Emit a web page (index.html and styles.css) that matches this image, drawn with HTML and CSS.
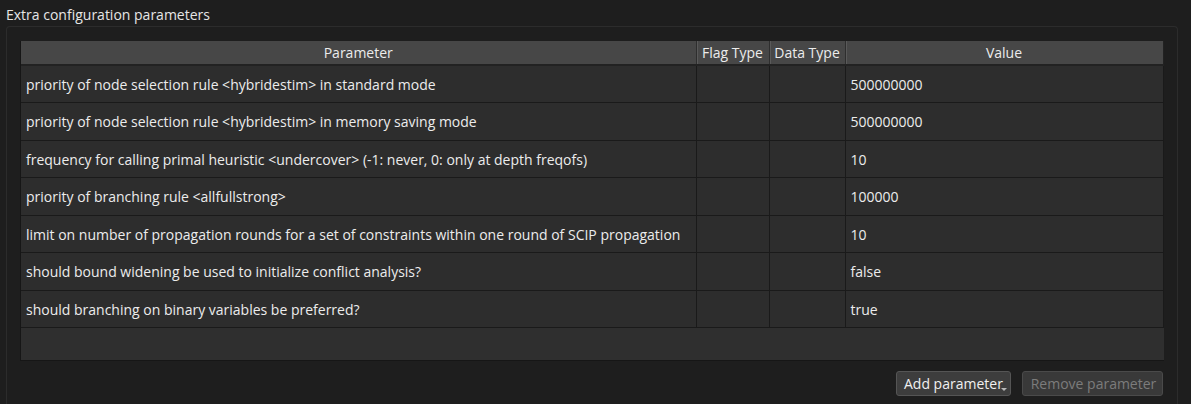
FILE: index.html
```html
<!DOCTYPE html>
<html>
<head>
<meta charset="utf-8">
<link rel="stylesheet" href="styles.css">
</head>
<body>
<div class="title">Extra configuration parameters</div>
<div class="group">
  <div class="view">
    <table class="grid">
      <colgroup>
        <col class="c-param"><col class="c-flag"><col class="c-data"><col class="c-value">
      </colgroup>
      <thead>
        <tr><th>Parameter</th><th>Flag Type</th><th>Data Type</th><th>Value</th></tr>
      </thead>
      <tbody>
        <tr><td>priority of node selection rule &lt;hybridestim&gt; in standard mode</td><td></td><td></td><td>500000000</td></tr>
        <tr><td>priority of node selection rule &lt;hybridestim&gt; in memory saving mode</td><td></td><td></td><td>500000000</td></tr>
        <tr><td>frequency for calling primal heuristic &lt;undercover&gt; (-1: never, 0: only at depth freqofs)</td><td></td><td></td><td>10</td></tr>
        <tr><td>priority of branching rule &lt;allfullstrong&gt;</td><td></td><td></td><td>100000</td></tr>
        <tr><td>limit on number of propagation rounds for a set of constraints within one round of SCIP propagation</td><td></td><td></td><td>10</td></tr>
        <tr><td>should bound widening be used to initialize conflict analysis?</td><td></td><td></td><td>false</td></tr>
        <tr><td>should branching on binary variables be preferred?</td><td></td><td></td><td>true</td></tr>
      </tbody>
    </table>
    <div class="filler"></div>
  </div>
  <div class="actions">
    <button class="btn btn-add">Add parameter<span class="menu-arrow"></span></button>
    <button class="btn btn-remove" disabled>Remove parameter</button>
  </div>
</div>
</body>
</html>
```
FILE: styles.css
```css
html, body {
  margin: 0;
  padding: 0;
  background: #1e1e1e;
  color: #e6e6e6;
  font-family: "Open Sans", "Noto Sans", sans-serif;
  font-size: 14px;
  overflow: hidden;
}

.title {
  padding: 5px 0 0 6px;
  height: 26px;
  line-height: 20px;
  box-sizing: border-box;
}

.group {
  margin-left: 6px;
  width: 1172px;
  height: 378px;
  box-sizing: border-box;
  border: 1px solid #2c2c2c;
  border-bottom: 0;
  border-radius: 4px 4px 0 0;
  padding: 14px 15px 0 13px;
}

.view {
  width: 1143px;
  border-left: 1px solid #161616;
  border-bottom: 1px solid #161616;
  background: #2e2e2e;
}

.grid {
  width: 1142px;
  border-collapse: collapse;
  table-layout: fixed;
}

.c-param { width: 675px; }
.c-flag { width: 73px; }
.c-data { width: 76px; }
.c-value { width: 318px; }

.grid th {
  height: 23px;
  padding: 0;
  background: #474747;
  color: #ececec;
  font-weight: normal;
  text-align: center;
  white-space: nowrap;
  border-bottom: 2px solid #222222;
  border-right: 1px solid #2e2e2e;
  box-shadow: inset 1px 0 0 #5a5a5a;
}

.grid th:first-child {
  box-shadow: none;
}

.grid th:last-child {
  border-right: 1px solid #222222;
}

.grid td {
  height: 37.5px;
  box-sizing: border-box;
  padding: 1px 0 0 5px;
  background: #2d2d2d;
  border-right: 1px solid #1a1a1a;
  border-bottom: 1px solid #1a1a1a;
  white-space: nowrap;
  overflow: hidden;
  color: #ececec;
}

.filler {
  height: 32px;
  background: #2f2f2f;
}

.actions {
  display: flex;
  justify-content: flex-end;
  gap: 11px;
  width: 1143px;
  margin-top: 10px;
}

.btn {
  position: relative;
  height: 25px;
  box-sizing: border-box;
  border: 1px solid #555555;
  border-radius: 3px;
  background: #3d3d3d;
  color: #f0f0f0;
  font-family: inherit;
  font-size: 14px;
  padding: 0 0 0 2px;
}

.btn-add {
  width: 115px;
  text-align: left;
  padding-left: 7px;
}
.btn-remove {
  width: 141px;
  color: #7c7c7c;
  border-color: #4a4a4a;
  background: #393939;
}

.menu-arrow {
  position: absolute;
  right: 3px;
  bottom: 4px;
  width: 0;
  height: 0;
  border-left: 3px solid transparent;
  border-right: 3px solid transparent;
  border-top: 3px solid #b8b8b8;
}
```
